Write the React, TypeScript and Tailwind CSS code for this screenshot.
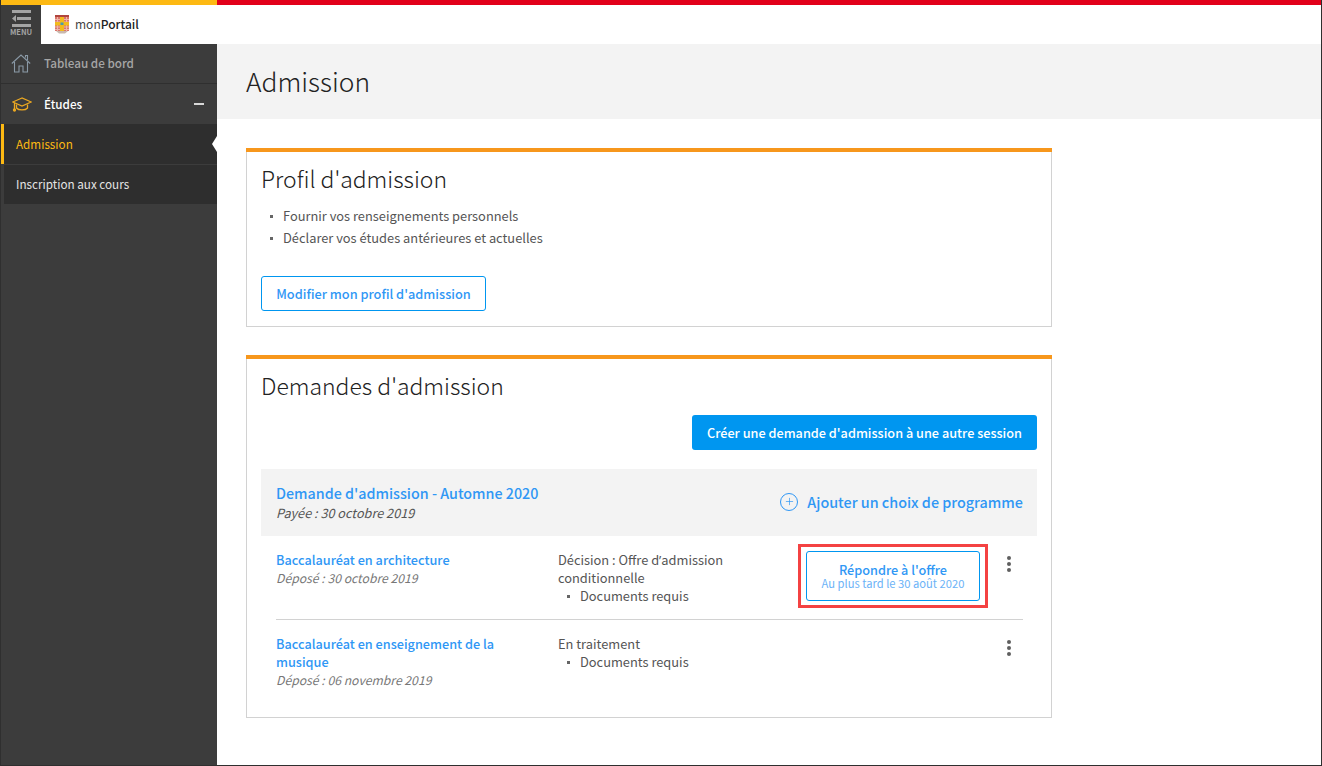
import { Plus } from 'lucide-react'

const FONT = "font-['Noto_Sans_CJK_SC','Noto_Sans',sans-serif]"

function MenuIcon() {
  return (
    <svg width="20" height="17" viewBox="0 0 20 17" fill="#a3a3a3">
      <rect x="1" y="0" width="19" height="3" />
      <rect x="6" y="7" width="14" height="3" />
      <rect x="1" y="14" width="19" height="3" />
      <path d="M5 5v7L1 8.5z" />
    </svg>
  )
}

function Logo() {
  return (
    <svg width="14" height="19" viewBox="0 0 14 19">
      <rect x="0" y="0" width="14" height="16" fill="#d9746a" />
      <rect x="0" y="0" width="14" height="2" fill="#b0453d" />
      <path d="M0 4.5h14M0 7h14M0 12h14M0 14.5h14M2.5 2v14M11.5 2v14" stroke="#eeb5a8" strokeWidth="1" />
      <rect x="5" y="2" width="4" height="14" fill="#f2bb1c" />
      <rect x="0" y="7" width="14" height="3.5" fill="#f2bb1c" />
      <rect x="5.5" y="7.5" width="3" height="2.5" fill="#4a9ab0" />
      <path d="M1 16h12l-3 2.5H4z" fill="#c9b8ae" />
    </svg>
  )
}

function HomeIcon() {
  return (
    <svg width="20" height="19" viewBox="0 0 20 19" fill="none" stroke="#8a99a6" strokeWidth="1.1">
      <path d="M.8 9.5 10 1l9.2 8.5" />
      <path d="M3.5 8v10h4.5v-6h4v6h4.5V8" />
      <path d="M14.5 3.5V1.5h2v4.5" />
    </svg>
  )
}

function CapIcon() {
  return (
    <svg width="20" height="15" viewBox="0 0 20 15" fill="none" stroke="#eda921" strokeWidth="1.3">
      <path d="M10 1 .8 5 10 9l9.2-4z" />
      <path d="M4.5 7.5v3.5c2 2.6 9 2.6 11 0V7.5" />
      <path d="M2.5 6v6" />
      <circle cx="2.5" cy="13" r="1" fill="#eda921" />
    </svg>
  )
}

function Dots() {
  return (
    <div className="flex flex-col gap-[2px]">
      <span className="size-1 rounded-full bg-[#5f5f5f]" />
      <span className="size-1 rounded-full bg-[#5f5f5f]" />
      <span className="size-1 rounded-full bg-[#5f5f5f]" />
    </div>
  )
}

function Bullet({ children }: { children: string }) {
  return (
    <li className="flex items-center h-[18px] text-[12.85px] text-[#555]">
      <span className="size-[3px] bg-[#666] mr-[10px] shrink-0" />
      {children}
    </li>
  )
}

function Sidebar() {
  return (
    <aside className="w-[216px] shrink-0 bg-[#3c3c3c]">
      <div className="h-10 flex items-center border-b border-[#2f2f2f] pl-[10px] pb-[1px]">
        <HomeIcon />
        <span className="ml-[13px] text-[11.7px] font-medium text-[#a6a6a6]">Tableau de bord</span>
      </div>
      <div className="h-10 flex items-center pl-[11px] pr-[13px]">
        <CapIcon />
        <span className="ml-3 text-[11.7px] font-medium text-white">Études</span>
        <span className="ml-auto w-[10px] h-[2px] bg-[#d8d8d8]" />
      </div>
      <div className="relative h-10 flex items-center bg-[#2e2e2e] border-l-[3px] border-[#fdb913] pl-3">
        <span className="text-[11.7px] text-[#fdb913]">Admission</span>
        <span className="absolute right-0 top-[12px] border-y-[8px] border-r-[5px] border-y-transparent border-r-white" />
      </div>
      <div className="h-10 flex items-center bg-[#2e2e2e] ml-[3px] pl-3 pb-[2px] border-t border-[#3c3c3c]">
        <span className="text-[11.7px] text-[#e4e4e4]">Inscription aux cours</span>
      </div>
    </aside>
  )
}

function Card({ title, className, children }: { title: string; className: string; children: React.ReactNode }) {
  return (
    <section className={`border border-[#d2d2d2] border-t-0 ${className}`}>
      <div className="h-1 -mx-px bg-[#f7971c]" />
      <div className="px-[14px]">
        <h2 className="text-[22.95px] leading-[32px] mt-[10px] font-light text-[#222]">{title}</h2>
        {children}
      </div>
    </section>
  )
}

export default function App() {
  return (
    <div className={`w-[1322px] h-[766px] flex flex-col overflow-hidden bg-white border-l border-[#2f2f2f] border-r border-b ${FONT}`}>
      <div className="flex h-[5px] shrink-0">
        <div className="w-[216px] bg-[#fdb913]" />
        <div className="flex-1 bg-[#e2001a]" />
      </div>
      <header className="flex h-[39px] shrink-0 bg-white">
        <div className="w-10 bg-[#3c3c3c] flex flex-col items-center pt-[5px]">
          <MenuIcon />
          <span className="text-[7.5px] leading-[10px] font-bold text-[#a3a3a3]">MENU</span>
        </div>
        <div className="flex items-center pl-[14px]">
          <Logo />
          <span className="ml-[6px] mb-[2px] text-[12px] text-[#444]">mon<span className="font-medium text-[#222]">Portail</span></span>
        </div>
      </header>
      <div className="flex flex-1 min-h-0">
        <Sidebar />
        <main className="flex-1 min-w-0">
          <div className="h-[75px] bg-[#f3f3f3] flex items-center pl-[29px] pb-[1px]">
            <h1 className="text-[26.4px] font-light text-[#222]">Admission</h1>
          </div>
          <div className="w-[806px] ml-[29px] mt-[29px]">
            <Card title="Profil d'admission" className="h-[179px]">
              <ul className="mt-[13px] ml-[9px] flex flex-col gap-1">
                <Bullet>Fournir vos renseignements personnels</Bullet>
                <Bullet>Déclarer vos études antérieures et actuelles</Bullet>
              </ul>
              <button className="mt-[29px] h-[35px] w-[225px] rounded-[3px] border border-[#0096f0] text-[12.75px] font-medium text-[#2f97f5]">
                Modifier mon profil d'admission
              </button>
            </Card>
            <Card title="Demandes d'admission" className="h-[363px] mt-[28px]">
              <div className="flex justify-end mt-[14px]">
                <button className="h-[35px] w-[345px] rounded-[3px] bg-[#0096f0] text-[12.7px] font-medium text-white">
                  Créer une demande d'admission à une autre session
                </button>
              </div>
              <div className="mt-[19px] h-[67px] bg-[#f3f3f3] flex items-center justify-between pl-[15px] pr-[14px]">
                <div className="-mt-[1px]">
                  <div className="text-[14.3px] leading-[20px] font-medium text-[#2f97f5]">Demande d'admission - Automne 2020</div>
                  <div className="text-[12.7px] leading-[18px] mt-[1px] italic text-[#555]">Payée : 30 octobre 2019</div>
                </div>
                <div className="flex items-center text-[14.35px] font-medium text-[#2f97f5] -mt-[1px]">
                  <span className="size-[18px] rounded-full border border-[#2f97f5] flex items-center justify-center mr-[9px]">
                    <Plus size={11} strokeWidth={1.5} />
                  </span>
                  Ajouter un choix de programme
                </div>
              </div>
              <div className="ml-[15px] mr-[14px] h-[84px] border-b border-[#d2d2d2] flex">
                <div className="w-[282px] pt-[15px] text-[12.7px] leading-[18px]">
                  <div className="font-medium text-[#2f97f5]">Baccalauréat en architecture</div>
                  <div className="italic text-[12.2px] text-[#777]">Déposé : 30 octobre 2019</div>
                </div>
                <div className="w-[240px] pt-[15px] text-[12.85px] leading-[18px] text-[#555]">
                  <div className="w-[190px]">Décision : Offre d<span className="font-['Open_Sans',sans-serif]">’</span>admission conditionnelle</div>
                  <ul className="ml-[9px]">
                    <Bullet>Documents requis</Bullet>
                  </ul>
                </div>
                <div className="relative flex-1">
                  <div className="absolute left-0 top-[8px] w-[190px] h-[64px] border-[3px] border-[#f44242] flex items-center justify-center">
                    <button className="w-[174px] h-[50px] rounded-[3px] border border-[#0096f0] flex flex-col items-center justify-center pb-[1px]">
                      <span className="text-[12.7px] leading-[15px] font-medium text-[#2f97f5]">Répondre à l'offre</span>
                      <span className="text-[11.2px] leading-[13px] text-[#6cb3f7]">Au plus tard le 30 août 2020</span>
                    </button>
                  </div>
                  <div className="absolute right-[12px] top-[20px]">
                    <Dots />
                  </div>
                </div>
              </div>
              <div className="ml-[15px] mr-[14px] flex">
                <div className="w-[282px] pt-[15px] text-[12.7px] leading-[18px]">
                  <div className="w-[240px] font-medium text-[#2f97f5]">Baccalauréat en enseignement de la musique</div>
                  <div className="italic text-[12.2px] text-[#777]">Déposé : 06 novembre 2019</div>
                </div>
                <div className="w-[240px] pt-[15px] text-[12.85px] leading-[18px] text-[#555]">
                  <div>En traitement</div>
                  <ul className="ml-[9px]">
                    <Bullet>Documents requis</Bullet>
                  </ul>
                </div>
                <div className="flex-1 flex justify-end pr-[12px] pt-[20px]">
                  <Dots />
                </div>
              </div>
            </Card>
          </div>
        </main>
      </div>
    </div>
  )
}
